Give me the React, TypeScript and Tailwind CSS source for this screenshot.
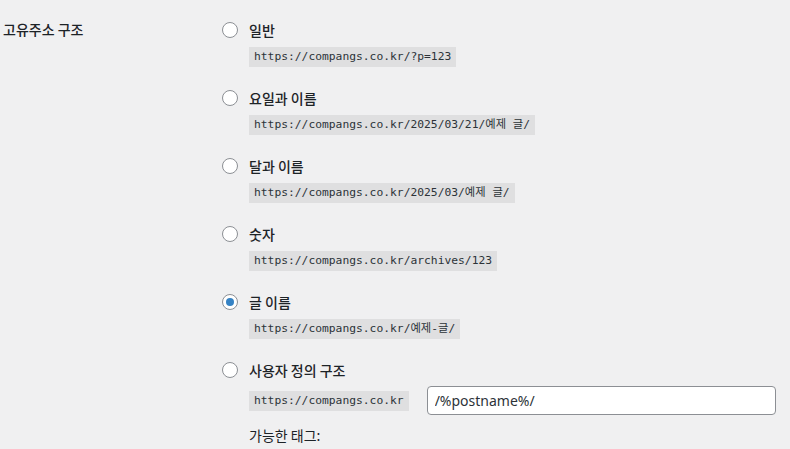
import React from 'react';

const options = [
  { label: '일반', url: 'https://compangs.co.kr/?p=123' },
  { label: '요일과 이름', url: 'https://compangs.co.kr/2025/03/21/예제 글/' },
  { label: '달과 이름', url: 'https://compangs.co.kr/2025/03/예제 글/' },
  { label: '숫자', url: 'https://compangs.co.kr/archives/123' },
  { label: '글 이름', url: 'https://compangs.co.kr/예제-글/', checked: true },
];

const Radio = ({ checked }: { checked?: boolean }) => (
  <span className="w-4 h-4 shrink-0 rounded-full border border-[#8c8f94] bg-white flex items-center justify-center">
    {checked && <span className="w-2 h-2 rounded-full bg-[#3582c4]" />}
  </span>
);

const Code = ({ children }: { children: React.ReactNode }) => (
  <code className="inline-flex items-center h-5 overflow-hidden bg-[#dfdfe0] px-[5px] text-[11.3px] leading-[14px] text-[#2c3338] font-['DejaVu_Sans_Mono','Noto_Sans_CJK_KR',monospace] whitespace-nowrap">
    {children}
  </code>
);

export default function App() {
  return (
    <div className="w-[790px] h-[449px] overflow-hidden bg-[#f0f0f1] text-[#1d2327] font-['Noto_Sans_CJK_KR','Noto_Sans',sans-serif] text-[14px]">
      <div className="flex">
        {/* Label column */}
        <div className="w-[222px] shrink-0 pl-[3px] pt-[19px]">
          <div className="font-medium leading-5">고유주소 구조</div>
        </div>

        {/* Options */}
        <div className="flex flex-col pt-[20px]">
          {options.map((o, idx) => (
            <div key={idx} className="flex flex-col items-start h-[68px]">
              <label className="flex items-center gap-[11px] h-5 leading-5">
                <Radio checked={o.checked} />
                <span className="font-medium">{o.label}</span>
              </label>
              <div className="pl-[27px] mt-[7px] flex">
                <Code>{o.url}</Code>
              </div>
            </div>
          ))}

          <div className="flex flex-col items-start">
            <label className="flex items-center gap-[11px] h-5 leading-5">
              <Radio />
              <span className="font-medium">사용자 정의 구조</span>
            </label>
            <div className="pl-[27px] mt-[6px] flex items-center gap-[18px]">
              <Code>https://compangs.co.kr</Code>
              <input
                readOnly
                value="/%postname%/"
                className="w-[349px] h-[29px] px-[7px] rounded-[4px] border border-[#8c8f94] bg-white text-[14px] text-[#2c3338] outline-none font-['Noto_Sans','Noto_Sans_CJK_KR',sans-serif]"
              />
            </div>
            <div className="pl-[27px] mt-[10px] leading-5 h-5">가능한 태그:</div>
          </div>
        </div>
      </div>
    </div>
  );
}
